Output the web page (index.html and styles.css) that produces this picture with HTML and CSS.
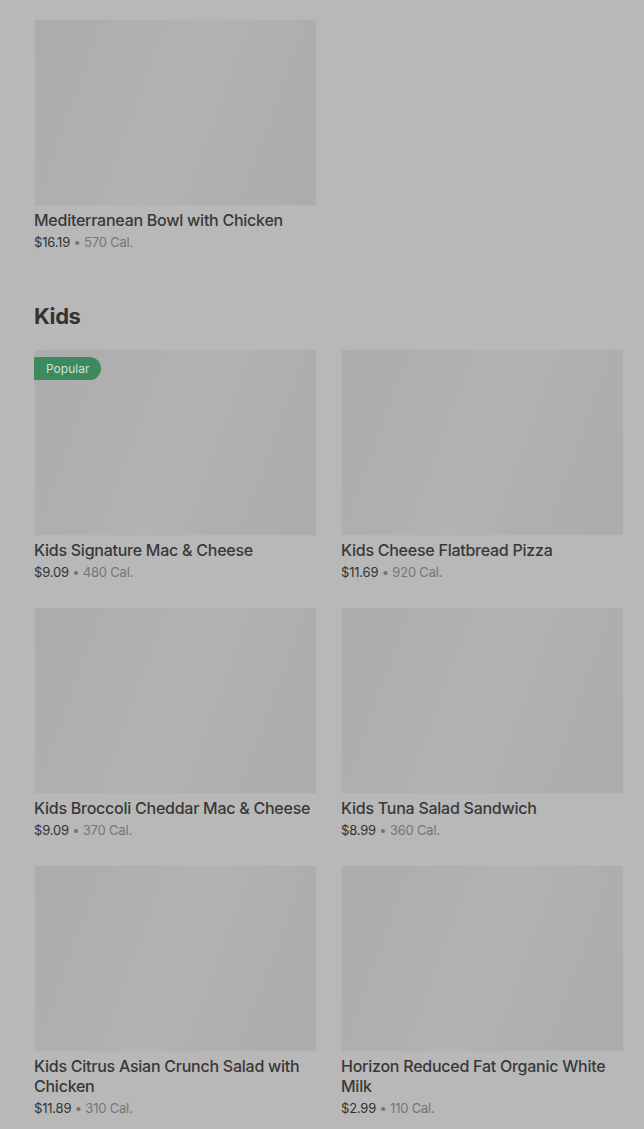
FILE: index.html
```html
<!DOCTYPE html>
<html lang="en">
<head>
    <meta charset="UTF-8">
    <meta name="viewport" content="width=device-width, initial-scale=1.0">
    <title>Menu - Kids</title>
    <link rel="stylesheet" href="styles.css">
</head>
<body>
    <div class="page">
        <!-- Tail of the previous section -->
        <div class="section">
            <div class="grid">
                <div class="item">
                    <div class="thumb"></div>
                    <div class="item-name">Mediterranean Bowl with Chicken</div>
                    <div class="item-meta"><span class="price">$16.19</span> &bull; 570 Cal.</div>
                </div>
            </div>
        </div>

        <!-- Kids -->
        <div class="section">
            <h2 class="section-title">Kids</h2>
            <div class="grid">
                <div class="item">
                    <div class="thumb">
                        <span class="badge">Popular</span>
                    </div>
                    <div class="item-name">Kids Signature Mac &amp; Cheese</div>
                    <div class="item-meta"><span class="price">$9.09</span> &bull; 480 Cal.</div>
                </div>
                <div class="item">
                    <div class="thumb"></div>
                    <div class="item-name">Kids Cheese Flatbread Pizza</div>
                    <div class="item-meta"><span class="price">$11.69</span> &bull; 920 Cal.</div>
                </div>
                <div class="item">
                    <div class="thumb"></div>
                    <div class="item-name">Kids Broccoli Cheddar Mac &amp; Cheese</div>
                    <div class="item-meta"><span class="price">$9.09</span> &bull; 370 Cal.</div>
                </div>
                <div class="item">
                    <div class="thumb"></div>
                    <div class="item-name">Kids Tuna Salad Sandwich</div>
                    <div class="item-meta"><span class="price">$8.99</span> &bull; 360 Cal.</div>
                </div>
                <div class="item">
                    <div class="thumb"></div>
                    <div class="item-name">Kids Citrus Asian Crunch Salad with Chicken</div>
                    <div class="item-meta"><span class="price">$11.89</span> &bull; 310 Cal.</div>
                </div>
                <div class="item">
                    <div class="thumb"></div>
                    <div class="item-name">Horizon Reduced Fat Organic White Milk</div>
                    <div class="item-meta"><span class="price">$2.99</span> &bull; 110 Cal.</div>
                </div>
            </div>
        </div>
    </div>
</body>
</html>
```

FILE: styles.css
```css
* {
    margin: 0;
    padding: 0;
    box-sizing: border-box;
}

body {
    font-family: 'Inter', 'Roboto', sans-serif;
    background: #b8b8b8; /* page dimmed behind a modal */
    color: #363636;
    overflow: hidden;
}

.page {
    padding: 19px 20px 0 34px;
}

.section {
    margin-bottom: 48px;
}

.section-title {
    font-size: 22px;
    font-weight: 700;
    line-height: 32px;
    letter-spacing: -0.4px;
    color: #333;
    margin-bottom: 17px;
}

.grid {
    display: grid;
    grid-template-columns: 283px 283px;
    column-gap: 24px;
    row-gap: 25px;
}

.thumb {
    position: relative;
    height: 187px;
    border: 1px solid #b6b6b6;
    background: linear-gradient(110deg, #acacac 0%, #b0b0b0 35%, #b3b3b3 50%, #afafaf 70%, #acacac 100%);
}

.badge {
    position: absolute;
    top: 7px;
    left: -1px;
    height: 23px;
    padding: 0 12px;
    border-radius: 0 12px 12px 0;
    background: #3d8a5f; /* Green */
    color: #cfe3d6;
    font-size: 12px;
    line-height: 23px;
}

.item-name {
    margin-top: 4px;
    font-size: 16px;
    font-weight: 500;
    line-height: 20px;
    letter-spacing: -0.25px;
    color: #383838;
}

.item-meta {
    margin-top: 2px;
    font-size: 13px;
    line-height: 20px;
    letter-spacing: -0.2px;
    color: #767676;
}

.price {
    color: #333;
}
```
